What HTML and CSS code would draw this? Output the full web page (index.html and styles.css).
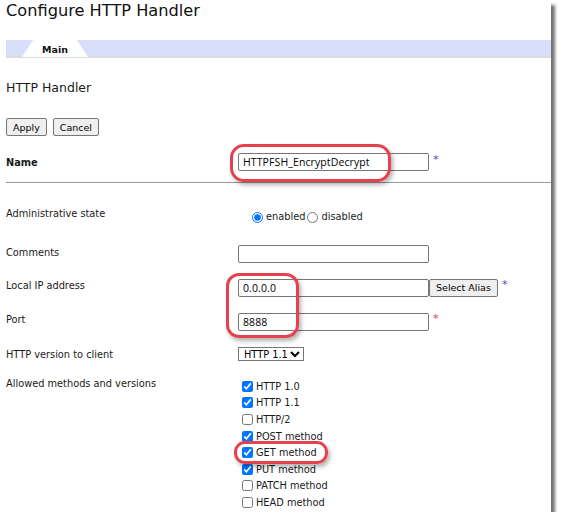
FILE: index.html
```html
<!DOCTYPE html>
<html>
<head>
<meta charset="utf-8">
<link rel="stylesheet" href="styles.css">
</head>
<body>
<div class="frame">
  <h1 class="title">Configure HTTP Handler</h1>
  <div class="tabbar">
    <div class="tab"><span>Main</span></div>
  </div>
  <h2 class="section">HTTP Handler</h2>
  <div class="buttons">
    <button class="btn">Apply</button>
    <button class="btn">Cancel</button>
  </div>
  <div class="row row-name">
    <div class="label bold">Name</div>
    <div class="ctrl"><input class="txt" type="text" value="HTTPFSH_EncryptDecrypt"><span class="star blue">*</span></div>
  </div>
  <div class="rule"></div>
  <div class="row row-admin">
    <div class="label">Administrative state</div>
    <div class="ctrl radios">
      <label class="opt"><input type="radio" name="st" checked>enabled</label>
      <label class="opt"><input type="radio" name="st">disabled</label>
    </div>
  </div>
  <div class="row row-comments">
    <div class="label">Comments</div>
    <div class="ctrl"><input class="txt" type="text" value=""></div>
  </div>
  <div class="row row-ip">
    <div class="label">Local IP address</div>
    <div class="ctrl"><input class="txt" type="text" value="0.0.0.0"><button class="btn alias">Select Alias</button><span class="star blue">*</span></div>
  </div>
  <div class="row row-port">
    <div class="label">Port</div>
    <div class="ctrl"><input class="txt" type="text" value="8888"><span class="star red">*</span></div>
  </div>
  <div class="row row-ver">
    <div class="label">HTTP version to client</div>
    <div class="ctrl"><select class="sel"><option>HTTP 1.1</option></select></div>
  </div>
  <div class="row row-methods">
    <div class="label">Allowed methods and versions</div>
    <div class="ctrl checks">
      <label class="chk"><input type="checkbox" checked>HTTP 1.0</label>
      <label class="chk"><input type="checkbox" checked>HTTP 1.1</label>
      <label class="chk"><input type="checkbox">HTTP/2</label>
      <label class="chk"><input type="checkbox" checked>POST method</label>
      <label class="chk"><input type="checkbox" checked>GET method</label>
      <label class="chk"><input type="checkbox" checked>PUT method</label>
      <label class="chk"><input type="checkbox">PATCH method</label>
      <label class="chk"><input type="checkbox">HEAD method</label>
      <div class="chk"><input type="checkbox" aria-label="more"></div>
    </div>
  </div>
  <div class="mark mark-name"></div>
  <div class="mark mark-ip"></div>
  <div class="mark mark-get"></div>
</div>
</body>
</html>
```
FILE: styles.css
```css
* { box-sizing: border-box; }
html, body { margin: 0; padding: 0; background: #fff; }
body { font-family: "DejaVu Sans", Verdana, sans-serif; color: #1a1a1a; }
.frame {
  position: relative;
  margin-left: 6px;
  width: 545px;
  height: 512px;
  background: #fff;
  overflow: hidden;
  box-shadow: 4px 5px 3px rgba(0,0,0,0.55);
}
.title {
  margin: 0;
  padding-top: 1px;
  font-weight: normal;
  font-size: 16.2px;
  line-height: 20px;
  color: #111;
}
.tabbar {
  margin-top: 19px;
  height: 18px;
  background: #d9defa;
  border-bottom: 2px solid #dcdcdc;
  position: relative;
}
.tab {
  position: absolute;
  left: 16px;
  top: 0;
  width: 66px;
  height: 17px;
  background: #fff;
  clip-path: polygon(0 100%, 17% 0, 83% 0, 100% 100%);
  display: flex;
  justify-content: center;
  align-items: center;
}
.tab span { font-size: 9.5px; font-weight: bold; color: #111; padding-top: 2px; }
.section {
  margin: 22px 0 0 0;
  font-weight: normal;
  font-size: 12.5px;
  line-height: 16px;
}
.buttons { margin-top: 22px; display: flex; gap: 6px; }
.btn {
  font-family: inherit;
  font-size: 9.5px;
  height: 18px;
  padding: 0 6px;
  background: #efefef;
  border: 1px solid #767676;
  border-radius: 2px;
  color: #000;
}
.row { display: flex; align-items: center; font-size: 9.8px; }
.label { width: 232px; flex: none; }
.bold { font-weight: bold; }
.ctrl { display: flex; align-items: center; }
.txt {
  width: 191px;
  height: 18px;
  border: 1px solid #767676;
  border-radius: 2px;
  padding: 0 4px;
  font-family: "Open Sans", "DejaVu Sans", sans-serif;
  font-size: 10.5px;
  line-height: 16px;
  letter-spacing: 0.1px;
  color: #000;
}
.star { margin-left: 4px; font-size: 11px; position: relative; top: -3px; }
.star.blue { color: #4a4ab8; }
.star.red { color: #e0305a; }
.alias { padding: 0 6px; margin-left: 0; }
.row-name { margin-top: 17px; height: 18px; }
.rule { margin-top: 11px; height: 1px; background: #999; width: 545px; }
.row-admin { margin-top: 25px; height: 16px; }
.row-admin .label { position: relative; top: -3px; }
.radios { gap: 0; }
.opt { display: flex; align-items: center; margin-right: 2px; }
.opt input { margin: 3px 3px 0 14px; width: 11px; height: 11px; accent-color: #0075ff; }
.opt + .opt input { margin-left: 0; }
.opt:first-child input { margin-left: 14px; }
.row-comments { margin-top: 22px; height: 16px; }
.row-comments .label { position: relative; top: -2px; }
.row-ip { margin-top: 17px; height: 17px; }
.row-ip .label { position: relative; top: -2px; }
.row-port { margin-top: 17px; height: 17px; }
.row-port .label { position: relative; top: -2px; }
.row-ver { margin-top: 17px; height: 14px; }
.sel {
  font-family: inherit;
  font-size: 9.8px;
  height: 14px;
  width: 66px;
  padding: 0 0 0 1px;
  border: 1px solid #767676;
  border-radius: 0;
  background: #fff;
  color: #000;
}
.row-methods { margin-top: 17px; align-items: flex-start; }
.checks { flex-direction: column; align-items: flex-start; padding-left: 4px; }
.chk { display: flex; align-items: center; height: 16.6px; }
.chk input { margin: 0 3px 0 0; width: 11px; height: 11px; accent-color: #0075ff; }
.mark {
  position: absolute;
  border: 3px solid #e4424c;
  border-radius: 12px;
  box-shadow: 2px 3px 4px rgba(0,0,0,0.3);
}
.mark-name { left: 224px; top: 144px; width: 161px; height: 38px; border-radius: 14px; }
.mark-ip { left: 220px; top: 273px; width: 73px; height: 65px; border-radius: 13px; }
.mark-get { left: 228px; top: 441px; width: 94px; height: 23px; border-radius: 11px; }
```
